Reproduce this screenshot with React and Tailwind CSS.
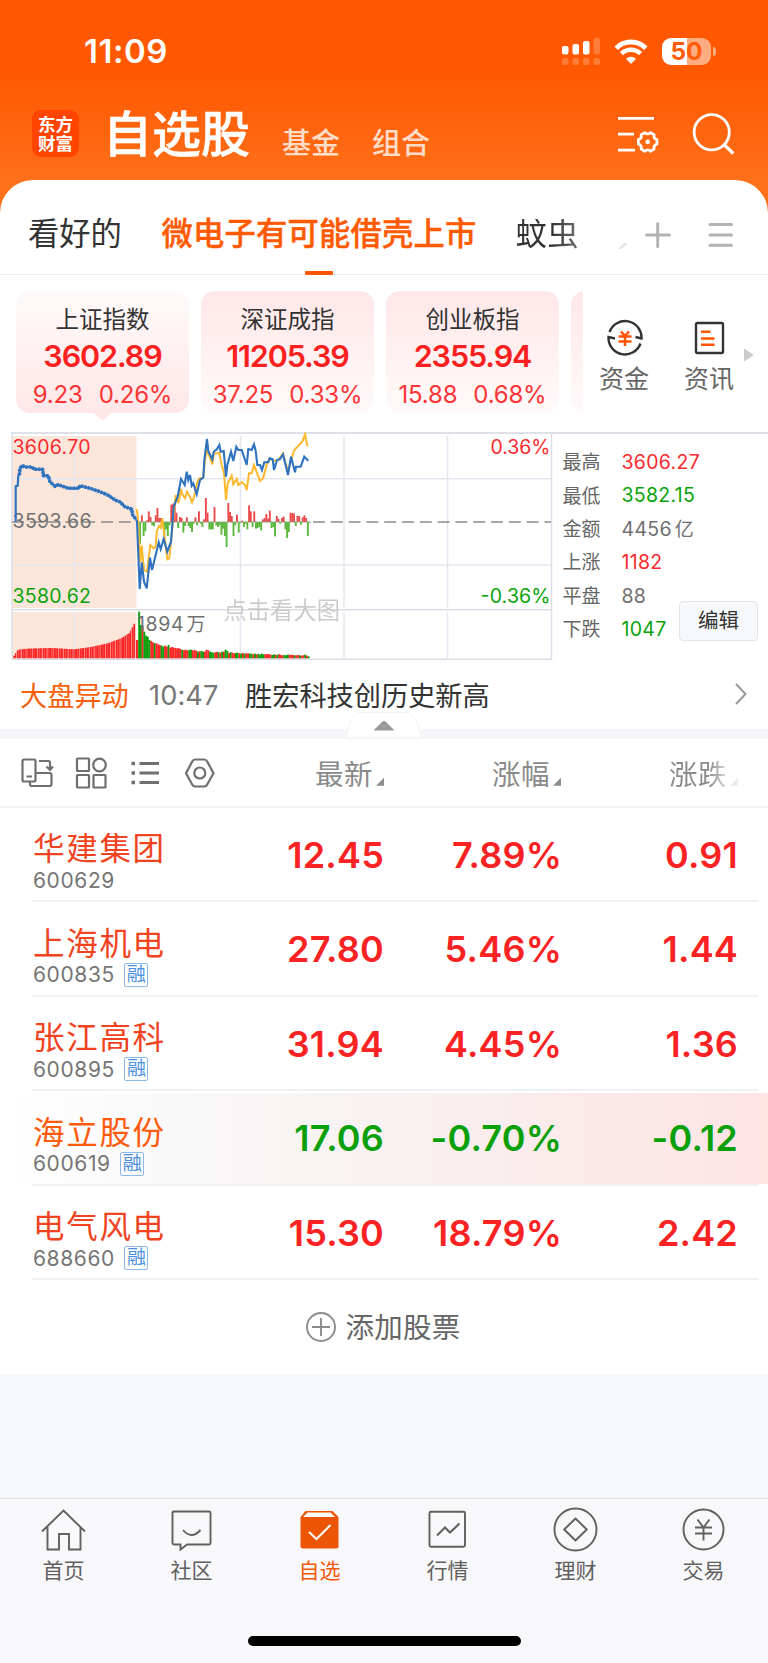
const INDEXES = [
  { name: '上证指数', val: '3602.89', diff: '9.23', pct: '0.26%', active: true },
  { name: '深证成指', val: '11205.39', diff: '37.25', pct: '0.33%' },
  { name: '创业板指', val: '2355.94', diff: '15.88', pct: '0.68%' },
]

const STATS = [
  { label: '最高', val: '3606.27', color: 'text-[#fa2a2d]' },
  { label: '最低', val: '3582.15', color: 'text-[#0aa30a]' },
  { label: '金额', val: '4456', unit: '亿', color: 'text-[#707070]' },
  { label: '上涨', val: '1182', color: 'text-[#fa2a2d]' },
  { label: '平盘', val: '88', color: 'text-[#707070]' },
  { label: '下跌', val: '1047', color: 'text-[#0aa30a]' },
]

const STOCKS = [
  { name: '华建集团', code: '600629', price: '12.45', pct: '7.89%', diff: '0.91', up: true },
  { name: '上海机电', code: '600835', price: '27.80', pct: '5.46%', diff: '1.44', up: true, rong: true },
  { name: '张江高科', code: '600895', price: '31.94', pct: '4.45%', diff: '1.36', up: true, rong: true },
  { name: '海立股份', code: '600619', price: '17.06', pct: '-0.70%', diff: '-0.12', up: false, rong: true, flash: true },
  { name: '电气风电', code: '688660', price: '15.30', pct: '18.79%', diff: '2.42', up: true, rong: true },
]

// chart points are in thirds of a pixel, origin at (125, 425)
const BLUE_PRE = [[-328,290],[-328,183],[-322,183],[-320,152],[-317,150],[-315,130],[-309,122],[-297,126],[-280,126],[-272,133],[-247,133],[-245,152],[-230,152],[-225,170],[-210,184],[-200,179],[-170,190],[-138,190],[-135,182],[-105,190],[-75,200],[-50,211],[-30,225],[-15,231],[0,245],[20,253],[23,270],[33,283]]
const BLUE = [[33,283],[36,290],[44,492],[50,412],[57,470],[65,490],[75,398],[81,435],[92,390],[101,352],[107,372],[116,342],[127,380],[138,350],[146,245],[158,215],[168,162],[179,180],[185,140],[190,165],[195,150],[200,182],[205,175],[215,208],[225,165],[235,158],[238,105],[246,42],[250,78],[262,103],[266,80],[276,72],[283,60],[287,80],[296,78],[303,155],[307,120],[318,80],[325,108],[334,65],[340,75],[350,75],[365,120],[370,72],[380,75],[387,58],[392,78],[397,120],[405,120],[411,135],[418,112],[430,112],[434,100],[443,103],[447,135],[456,105],[465,102],[474,88],[489,150],[498,95],[510,142],[513,125],[527,125],[538,95],[550,107]]
const GOLD = [[35,252],[38,275],[46,412],[50,362],[57,435],[66,440],[76,360],[86,370],[92,365],[95,320],[102,302],[107,308],[112,280],[118,330],[127,403],[133,400],[138,350],[148,250],[152,210],[160,235],[168,192],[172,208],[180,220],[186,200],[195,215],[201,232],[207,215],[216,175],[222,160],[235,158],[240,105],[247,75],[262,118],[267,85],[283,85],[290,120],[297,145],[303,225],[308,175],[320,152],[325,178],[335,162],[340,180],[350,172],[360,180],[365,195],[372,145],[380,145],[387,120],[395,142],[405,168],[415,158],[425,118],[434,100],[445,108],[460,105],[474,85],[480,110],[490,138],[500,98],[508,75],[520,62],[532,50],[540,28],[546,60],[550,62]]
const FLOW = [-65,20,-42,-28,5,32,15,-10,-13,20,42,12,12,-15,-40,-22,-42,-10,52,55,57,28,-18,15,12,-32,-12,14,-12,-18,-30,-5,14,-10,32,-5,-15,8,72,28,-22,-22,-22,45,-10,-15,-10,-38,-20,-42,-75,57,30,18,-42,-10,22,-32,-3,4,-15,-5,-22,50,32,-15,32,-20,-18,-15,-25,8,12,24,10,34,-18,-15,-43,18,10,-5,12,16,-22,-48,-30,28,27,25,-12,18,18,-8,14,20,12,-42,-3]
const VOL = [140,100,98,80,68,65,55,52,48,45,45,42,40,38,35,38,35,40,32,34,32,31,30,30,28,25,24,26,24,25,26,24,25,23,20,21,22,20,20,26,24,20,18,17,18,19,18,17,20,20,26,22,16,18,17,15,16,17,15,14,16,14,15,15,14,14,12,14,12,13,11,14,12,13,12,13,11,10,12,10,11,12,10,9,10,9,11,11,10,10,9,9,10,9,8,9,11,8,6]
const VOL_C = 'GGRGGGGRRGRRRGGRRGRRRRRRRGRRRGGRRRGRGGRRRGGGRRGRGRGGRGRRGGRGRGRRGGRGRGGGGRRRRGGRGRRRGGGRRRGRRGRRGRGG'
const PRE = [[0,8],[12,26],[40,29],[110,31],[180,27],[230,34],[280,45],[320,60],[345,76],[362,110]]

const pts = list => list.map(([x, y]) => `${(125 + x / 3).toFixed(1)},${(425 + y / 3).toFixed(1)}`).join(' ')

const preHeight = x => {
  const i = Math.max(1, PRE.findIndex(p => p[0] >= x))
  const [x0, y0] = PRE[i - 1]
  const [x1, y1] = PRE[i]
  return y0 + ((x - x0) / (x1 - x0)) * (y1 - y0)
}

function StatusBar() {
  return (
    <div className="h-[103px] flex items-center text-white">
      <span className="ml-[84px] w-[478px] text-[33px] font-semibold tracking-[0.5px]">11:09</span>
      <svg className="w-[39px] h-[28px]" viewBox="0 0 39 28" fill="#fff">
        <rect x="0" y="8" width="6.5" height="8.5" rx="2" />
        <rect x="10.5" y="6" width="6.5" height="10.5" rx="2" />
        <rect x="21" y="3" width="6.5" height="13.5" rx="2" />
        <rect x="31.5" y="0" width="6.5" height="16.5" rx="2" opacity=".22" />
        {[0, 10.5, 21, 31.5].map(x => <rect key={x} x={x} y="20" width="6.5" height="7" rx="2" opacity=".22" />)}
      </svg>
      <svg className="ml-[13px] w-[34px] h-[25px]" viewBox="0 0 34 25" fill="none" stroke="#fff">
        <path d="M2.2 9.2a21 21 0 0 1 29.6 0" strokeWidth="5" />
        <path d="M7.5 14.7a13.5 13.5 0 0 1 19 0" strokeWidth="4.6" />
        <path d="M17 25l-5-5.2a7.3 7.3 0 0 1 10 0z" fill="#fff" stroke="none" />
      </svg>
      <div className="ml-[14px] relative w-[49px] h-[27px] rounded-[9px] bg-[linear-gradient(90deg,#fff_51%,#ffac80_51%)] flex items-center justify-center">
        <span className="text-[24.5px] leading-none font-bold text-[#ff5c06]">50</span>
        <i className="absolute -right-[5px] top-[9px] w-[3px] h-[9px] rounded-r-full bg-[#ffac80]" />
      </div>
    </div>
  )
}

function Header() {
  return (
    <div className="h-[76.5px] flex text-white whitespace-nowrap leading-none">
      <div className="ml-8 mt-[7px] w-[47px] h-[47px] rounded-[9px] bg-[#ff4400] flex flex-col items-center justify-center text-[17.5px] leading-[19px] font-bold">
        <span>东方</span>
        <span>财富</span>
      </div>
      <span className="ml-[24px] mt-[7px] w-[179px] text-[49px] font-medium [-webkit-text-stroke:0.6px_#fff]">自选股</span>
      <span className="mt-[26px] w-[90px] text-[29px] text-[#ffdcc8] font-medium">基金</span>
      <span className="mt-[26px] w-[245px] text-[29px] text-[#ffdcc8] font-medium">组合</span>
      <svg className="mt-[10px] w-[43px] h-[44px]" viewBox="617 113 43 44" fill="none" stroke="#fff" strokeWidth="2.8">
        <path d="M618 118.3h36M618 134.2h16M618 150.2h17" />
        <path d="M644.9 132.6q2.8 2.6 5.6 0l3.6 2.1q-.8 3.8 2.9 5v4.4q-3.7 1.2-2.9 5l-3.6 2.1q-2.8-2.6-5.6 0l-3.7-2.1q.8-3.8-2.8-5v-4.4q3.6-1.2 2.8-5z" strokeLinejoin="round" />
        <circle cx="647.7" cy="141.9" r="2.3" fill="#fff" stroke="none" />
      </svg>
      <svg className="ml-[32px] mt-[9px] w-[44px] h-[44px]" viewBox="692 112 44 44" fill="none" stroke="#fff" strokeWidth="2.8">
        <circle cx="711.7" cy="132.3" r="17.6" />
        <path d="M724 144.5l9.3 9" strokeWidth="3.2" />
      </svg>
    </div>
  )
}

function GroupTabs() {
  return (
    <div className="relative h-[95px] border-b border-[#ececec] flex items-center pt-[17px] pl-[28px] text-[31.3px] whitespace-nowrap leading-none text-[#333]">
      <span className="w-[133.5px]">看好的</span>
      <span className="w-[354px] font-medium text-[#ff5a00] tracking-[0.2px] [-webkit-text-stroke:0.4px_#ff5a00]">微电子有可能借壳上市</span>
      <span className="w-[103px] tracking-[0.5px] bg-[linear-gradient(90deg,#333_36px,#777_66px)] bg-clip-text text-transparent">蚊虫</span>
      <svg className="-mt-[1px] w-[119px] h-[40px]" viewBox="619 215 119 40" fill="none" stroke="#b3b3b3" strokeWidth="3" strokeLinecap="round">
        <path d="M620.5 248l5-4" stroke="#e4e4e4" strokeWidth="2.5" />
        <path d="M646.5 235h23M657.7 223.500v23" />
        <path d="M710 224.5h21.5M710 235h21.5M710 245.2h21.5" />
      </svg>
      <i className="absolute left-[305px] bottom-[-1px] w-[28px] h-[4px] rounded-[1px] bg-[#ff5500]" />
    </div>
  )
}

function IndexCards() {
  return (
    <div className="h-[157.5px] pt-[16px] pl-4 flex">
      <div className="flex gap-3 w-[567px] overflow-hidden leading-none">
        {INDEXES.map(c => (
          <div key={c.name} className="relative w-[173px] shrink-0">
            <div className={`h-[122px] rounded-[14px] flex flex-col items-center ${c.active ? 'bg-gradient-to-b from-[#fffafa] to-[#ffe7e8]' : 'bg-gradient-to-b from-[#ffe7e8] to-[#fffafa]'}`}>
              <span className="mt-[17px] text-[23.5px] text-[#333]">{c.name}</span>
              <span className="mt-[10px] text-[30.5px] leading-[30px] font-semibold text-[#fa2020] tracking-[-1.1px]">{c.val}</span>
              <span className="mt-[12px] flex gap-[16px] text-[24px] text-[#fb3535] tracking-[-0.2px]">
                <span>{c.diff}</span>
                <span>{c.pct}</span>
              </span>
            </div>
            {c.active && <i className="absolute left-[77px] top-[122px] w-[19px] h-[8px] bg-[#ffe7e8] [clip-path:polygon(0_0,100%_0,50%_100%)]" />}
          </div>
        ))}
        <div className="w-[173px] h-[122px] shrink-0 rounded-[14px] bg-gradient-to-b from-[#ffe7e8] to-[#fffafa]" />
      </div>
      <div className="ml-[15px] w-[52px] flex flex-col items-center text-[25px] leading-none text-[#666] whitespace-nowrap">
        <svg className="mt-[28px] w-[38px] h-[38px]" viewBox="605 319 38 38" fill="none" stroke="#333" strokeWidth="2.4">
          <path d="M609.5 332a16.5 16.5 0 0 1 32 6.5l-6-1.5" />
          <path d="M640.5 343.5a16.5 16.5 0 0 1-32-6.5l6.5 1.5" />
          <path d="M621 331.5l4 4.500 4-4.500M618.5 336.500h13M618.5 341.500h13M625 336.500v9.500" stroke="#ff5500" strokeWidth="2.5" />
        </svg>
        <span className="mt-[10px]">资金</span>
      </div>
      <div className="ml-[33px] w-[52px] flex flex-col items-center text-[25px] leading-none text-[#666] whitespace-nowrap">
        <svg className="mt-[28px] w-[38px] h-[38px]" viewBox="690 319 38 38" fill="none" stroke="#333" strokeWidth="2.4">
          <rect x="696" y="323" width="27" height="30" rx="1.5" />
          <path d="M701 331.7h9.5M701 338.5h13.5M701 344.7h13.5" stroke="#ff5500" strokeWidth="2.5" />
        </svg>
        <span className="mt-[10px]">资讯</span>
      </div>
      <i className="ml-[9px] mt-[58px] w-[10px] h-[13px] bg-[#ccc] [clip-path:polygon(0_0,100%_50%,0_100%)]" />
    </div>
  )
}

function MarketChart() {
  return (
    <svg className="w-[542px] h-[230px] shrink-0" viewBox="11 432 542 230">
      <path d="M12 436h124.500v172H12zM12 612h124.500v46H12z" fill="#fce6da" />
      <path d="M74.500 435.500v172M74.500 612v46M240.500 435.500v172M240.500 612v46M344 435.500v172M344 612v46M447.500 435.500v172M447.500 612v46M12 478.700h540M12 565h540" stroke="#e4e7f0" strokeWidth="1.5" />
      <path d="M12 609.700h540M12 659.200h540M12 432v228M551.500 432v228" stroke="#dadde5" strokeWidth="1.4" fill="none" />
      <path d="M12 522h124" stroke="#8c8c8c" strokeWidth="1.7" strokeDasharray="12 5.8" />
      <path d="M313 522h238" stroke="#8c8c8c" strokeWidth="1.7" strokeDasharray="12 5.8" />
      {FLOW.map((v, i) => (
        <rect key={i} x={139.2 + i * 1.729} width="1.9" y={v > 0 ? 522 - v / 3 : 522} height={Math.abs(v) / 3} fill={v > 0 ? '#ea4a4c' : '#5cb83c'} />
      ))}
      <path d="M137 522h173" stroke="#8a9a70" strokeWidth=".8" />
      {Array.from({ length: 70 }, (_, i) => {
        const h = preHeight(i * 5.2) / 3
        return <rect key={i} x={13.3 + i * 1.74} width={i % 3 === 1 ? 1.3 : 1.8} y={658.3 - h} height={h} fill="#f92828" />
      })}
      <rect x="136" y="640" width="2.4" height="18.3" fill="#f92828" />
      {VOL.map((v, i) => (
        <rect key={i} x={138.2 + i * 1.729} width="1.9" y={658.3 - v / 3} height={v / 3} fill={VOL_C[i] === 'G' ? '#0a9f0a' : '#f92828'} />
      ))}
      <g fontSize="19.5" fill="#707070">
        <text x="12.5" y="453.7" textLength="78" fill="#fa2a2d">3606.70</text>
        <text x="12.5" y="528" textLength="79">3593.66</text>
        <text x="12.5" y="602.6" textLength="78.5" fill="#0aa30a">3580.62</text>
        <text x="490.5" y="453.7" textLength="60" fill="#fa2a2d">0.36%</text>
        <text x="480.5" y="602.6" textLength="70" fill="#0aa30a">-0.36%</text>
        <text x="137" y="631" textLength="46.5">1894</text>
        <text x="186.5" y="631" fontSize="19">万</text>
        <text x="223.5" y="618.6" fontSize="23.3" fill="#c4c4c4" opacity=".85">点击看大图</text>
      </g>
      <polyline points={pts(GOLD)} fill="none" stroke="#fdb92e" strokeWidth="2" />
      <polyline points={pts(BLUE_PRE)} fill="none" stroke="#2f72c0" strokeWidth="2.2" strokeLinejoin="round" />
      <polyline points={pts(BLUE_PRE.slice(4))} fill="none" stroke="#2f72c0" strokeWidth="3.6" strokeLinejoin="round" strokeDasharray="2.4 1" />
      <polyline points={pts(BLUE)} fill="none" stroke="#2f72c0" strokeWidth="2.1" />
    </svg>
  )
}

function Market() {
  return (
    <div className="ml-[11px] h-[230px] flex border-t-2 border-[#dfe1e8]">
      <div className="-mt-[2px] w-[542px]"><MarketChart /></div>
      <div className="pt-[12px] pl-[9.5px] w-[126px] text-[19.5px] leading-none">
        {STATS.map(s => (
          <div key={s.label} className="h-[33.4px] flex items-center whitespace-nowrap">
            <span className="w-[59px] shrink-0 text-[19px] text-[#666]">{s.label}</span>
            <span className={`${s.color} tracking-[0.3px]`}>{s.val}{s.unit && <span className="ml-[3px] text-[19px]">{s.unit}</span>}</span>
          </div>
        ))}
      </div>
      <button className="mt-[167px] w-[79px] h-[40px] rounded-[4px] border border-[#e2e4ea] bg-[#f7f8fa] pt-[1px] text-[20.5px] leading-none text-[#333]">编辑</button>
    </div>
  )
}

function NewsBar() {
  return (
    <>
      <div className="h-[67px] pt-[2px] flex items-center text-[27.2px] leading-none whitespace-nowrap">
        <span className="ml-[20px] w-[129px] text-[#f5600a]">大盘异动</span>
        <span className="w-[96px] -mt-[1px] text-[#777] tracking-[0.1px]">10:47</span>
        <span className="w-[490px] text-[#333]">胜宏科技创历史新高</span>
        <svg className="-mt-[6px] w-[12px] h-[24px]" viewBox="0 0 12 24" fill="none" stroke="#999" strokeWidth="2">
          <path d="M1 2l9.5 10L1 22" />
        </svg>
      </div>
      <div className="relative h-[10px] bg-[#f5f6f9]">
        <svg className="absolute left-[346px] -top-[17px] w-[76px] h-[26px]" viewBox="0 0 76 26">
          <path d="M.5 25Q4 1 15 .7H60Q71.5 1 75 25" fill="#fff" stroke="#f1f1f3" />
          <path d="M28.5 18l8-8q1.5-1.300 3 0l8 8z" fill="#999" stroke="#999" strokeLinejoin="round" />
        </svg>
      </div>
    </>
  )
}

function SortMark({ faded }) {
  return <i className={`ml-[3px] mt-[14px] w-[8px] h-[8px] [clip-path:polygon(100%_0,100%_100%,0_100%)] ${faded ? 'bg-[#ececee]' : 'bg-[#8b8b90]'}`} />
}

function ListHead() {
  return (
    <div className="h-[68.5px] pt-[5px] border-b-2 border-[#f2f2f4] flex items-center text-[28.5px] leading-none text-[#8a8a8a] whitespace-nowrap">
      <svg className="-mt-[4px] ml-[20px] w-[196px] h-[34px]" viewBox="20 756 196 34" fill="none" stroke="#6f6f6f" strokeWidth="2.2">
        <rect x="22.5" y="759.5" width="13" height="22" rx="1.5" />
        <path d="M26.5 776.5h5.5M39 761h9.500q1.500 0 1.500 1.500V769M46.500 766.500l3.500 3.500 3-3.500M36 773h13.500q2 0 2 2v9q0 2-2 2H32q-2 0-2-2v-2" />
        <rect x="77" y="758.5" width="12" height="12.5" rx=".5" />
        <circle cx="99.5" cy="765" r="6.3" />
        <rect x="77" y="775" width="12" height="12.5" rx=".5" />
        <rect x="93.5" y="775" width="12" height="12.5" rx=".5" />
        <path d="M139.5 763.5H159M139.5 773H159M139.5 782.5H159" strokeWidth="3" />
        <path d="M131.5 763.5h3.500M131.5 773h3.500M131.5 782.5h3.500" strokeWidth="3.5" />
        <path d="M186 773.2l6.200-11.700q1-2 3-2h9q2 0 3 2l6.300 11.700-6.300 11.300q-1 2-3 2h-9q-2 0-3-2z" />
        <circle cx="199.8" cy="773" r="5.5" />
      </svg>
      <div className="w-[168px] flex items-center justify-end tracking-[0.5px]">最新<SortMark /></div>
      <div className="w-[177px] flex items-center justify-end tracking-[0.5px]">涨幅<SortMark /></div>
      <div className="w-[177px] flex items-center justify-end tracking-[0.5px]">
        <span className="bg-[linear-gradient(90deg,#8a8a8a_38px,#d4d4d4_57px)] bg-clip-text text-transparent">涨跌</span>
        <SortMark faded />
      </div>
    </div>
  )
}

function StockRow({ s }) {
  return (
    <div className={`h-[94.5px] pt-[2px] ${s.flash ? 'bg-[linear-gradient(90deg,#fff_1%,#fafafa_18%,#f8f4f4_40%,#faecec_68%,#ffe4e4)] bg-no-repeat bg-[length:100%_91px] bg-[position:0_2px]' : ''}`}>
      <div className="ml-[32px] mr-[10px] h-[92.5px] border-b-2 border-[#f1f1f3] flex leading-none">
        <div className="w-[151px] pl-[1px] pt-[23.5px]">
          <div className={`text-[31.5px] tracking-[1.7px] whitespace-nowrap ${s.flash ? 'text-[#ff5a0a]' : 'text-[#f0431e]'}`}>{s.name}</div>
          <div className="h-[24px] mt-[3.5px] flex items-center text-[21px] tracking-[0.6px] text-[#757575]">
            {s.code}
            {s.rong && <span className="ml-[9.5px] w-[24px] h-[24px] rounded-[2px] border border-[#8db8ea] text-[19px] leading-[22px] tracking-normal text-center text-[#4a8fe0]">融</span>}
          </div>
        </div>
        <div className={`flex pt-[27px] text-[36px] font-semibold tracking-[0.2px] ${s.up ? 'text-[#fa2222]' : 'text-[#0aa00a]'}`}>
          <span className="w-[201px] text-right">{s.price}</span>
          <span className="w-[178px] text-right">{s.pct}</span>
          <span className="w-[176px] text-right">{s.diff}</span>
        </div>
      </div>
    </div>
  )
}

const TABS = [
  { label: '首页', icon: <path d="M1 22.500L22.500 1.500 44 22.500M6.500 18v22.500h11.500V25h10v15.500H39.500V18" /> },
  { label: '社区', icon: <><path d="M5.500 2.500H40q1.500 0 1.500 1.500v30q0 1.500-1.500 1.500H18l-6.500 5V35.500H5.500q-2 0-2-1.500V4q0-1.500 2-1.500z" /><path d="M14 21q8.500 10 17.500 0" /></> },
  { label: '自选', active: true, icon: <><path d="M8.500 2h27l6 6v29q0 2.500-2.500 2.500H6Q3.500 39.500 3.500 37V8z" fill="#eb5505" stroke="none" /><path d="M10.500 3.500h23L38 8H6z" fill="#fff" stroke="none" /><path d="M12 23l7.500 7L33.500 16" stroke="#fff" strokeWidth="2" /></> },
  { label: '行情', icon: <><rect x="4.500" y="2.800" width="35.500" height="35" rx="1.500" /><path d="M12 26.500l8-8 5 5 9.500-9" strokeWidth="2" /></> },
  { label: '理财', icon: <><circle cx="22.500" cy="20.500" r="21" /><path d="M22.500 9.500l11.300 11-11.300 11-11.300-11z" strokeLinejoin="round" /></> },
  { label: '交易', icon: <><circle cx="22.500" cy="20.500" r="20" /><path d="M16.500 10.500l6 8 6-8M14 18.500h17M14 24.500h17M22.500 18.500v13" /></> },
]

function TabBar() {
  return (
    <div className="h-[165px] border-t border-[#e0e0e4] bg-[#f8f8fb]">
      <div className="h-[136.5px] grid grid-cols-6 text-[21px] leading-none">
        {TABS.map(t => (
          <div key={t.label} className={`flex flex-col items-center pr-[1px] ${t.active ? 'text-[#f05a0a]' : 'text-[#606060]'}`}>
            <svg className="mt-[10px] w-[45px] h-[43px] overflow-visible" viewBox="0 0 45 43" fill="none" stroke="#606060" strokeWidth="1.9">{t.icon}</svg>
            <span className="mt-[8px]">{t.label}</span>
          </div>
        ))}
      </div>
      <div className="mx-auto w-[273px] h-[10px] rounded-full bg-black" />
    </div>
  )
}

export default function App() {
  return (
    <div className="w-[768px] h-[1663px] overflow-hidden bg-[#f7f8fa] font-['Inter','Noto_Sans_CJK_SC',sans-serif]">
      <div className="bg-[linear-gradient(180deg,#ff5800_75px,#ff701a_180px)]">
        <StatusBar />
        <Header />
        <div className="rounded-t-[33px] bg-white">
          <GroupTabs />
          <IndexCards />
          <Market />
          <NewsBar />
          <ListHead />
          {STOCKS.map(s => <StockRow key={s.code} s={s} />)}
          <div className="h-[94px] pt-[3px] flex items-center justify-center text-[28.5px] tracking-[0.3px] leading-none text-[#666]">
            <svg className="-mt-[3px] w-[30px] h-[30px] mr-[9px]" viewBox="0 0 30 30" fill="none" stroke="#8b8b90" strokeWidth="1.9">
              <circle cx="15" cy="15" r="14" />
              <path d="M6 15h18M15 6v18" />
            </svg>
            <span className="mr-[1px]">添加股票</span>
          </div>
        </div>
      </div>
      <div className="h-[124px] bg-[#f7f8fa]" />
      <TabBar />
    </div>
  )
}
